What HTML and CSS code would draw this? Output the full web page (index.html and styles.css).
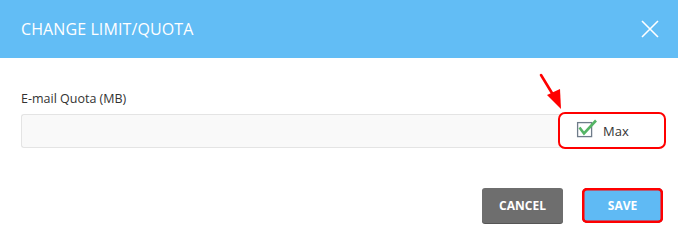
FILE: index.html
```html
<!DOCTYPE html>
<html>
<head>
<meta charset="utf-8">
<link rel="stylesheet" href="styles.css">
</head>
<body>
<div class="modal">
  <div class="header">
    <span class="title">CHANGE LIMIT/QUOTA</span>
    <svg class="close" width="18" height="18" viewBox="0 0 18 18"><path d="M1 1L17 17M17 1L1 17" stroke="#fff" stroke-width="1.6" fill="none"/></svg>
  </div>
  <div class="body">
    <label class="label">E-mail Quota (MB)</label>
    <div class="group">
      <div class="input"></div>
      <div class="addon">
        <svg class="cb" width="22" height="20" viewBox="0 0 22 20"><rect x="1.6" y="4.6" width="14" height="14" fill="#fff" stroke="#6f7c8a" stroke-width="1.3"/><path d="M3.5 9.5L8 15.5L20 2.5" stroke="#55b565" stroke-width="2.6" fill="none"/></svg>
        <span class="max">Max</span>
      </div>
      <div class="highlight"></div>
      <svg class="arrow" width="30" height="42" viewBox="0 0 30 42"><path d="M3 3L17 26" stroke="#f00" stroke-width="2.6" fill="none" stroke-linecap="round"/><path d="M9 23L23 37L22 17Z" fill="#f00"/></svg>
    </div>
  </div>
  <div class="footer">
    <button class="btn cancel">CANCEL</button>
    <button class="btn save">SAVE</button>
  </div>
</div>
</body>
</html>
```
FILE: styles.css
```css
* { box-sizing: border-box; }
body { margin: 0; font-family: "Open Sans", sans-serif; background: #fff; }
.modal { width: 678px; height: 232px; }
.header {
  height: 58px; background: #62bdf5;
  display: flex; align-items: center; justify-content: space-between;
  padding: 0 19px 0 21px;
}
.title { color: #fff; font-size: 16px; font-weight: 500; letter-spacing: 0.1px; }
.close { display: block; }
.body { padding: 32px 21px 0 21px; }
.label { display: block; font-size: 12.5px; color: #333; font-weight: 500; line-height: 18px; margin-bottom: 6px; }
.group { display: flex; height: 34px; position: relative; }
.input { flex: 1; background: #f9f9f9; border: 1px solid #e4e4e4; border-right: none; border-radius: 3px 0 0 3px; }
.addon {
  width: 97px; background: #fff;
  display: flex; align-items: center; padding-left: 16px;
}
.cb { display: block; margin-top: -6px; }
.max { font-size: 13px; color: #333; margin-left: 5px; }
.highlight {
  position: absolute; left: 537px; top: -2px; width: 108px; height: 37px;
  border: 2.5px solid #f00; border-radius: 7px;
}
.arrow { position: absolute; left: 517px; top: -42px; }
.footer { display: flex; justify-content: flex-end; gap: 19px; padding: 40px 15px 0 0; }
.btn {
  height: 35px; width: 81px; border: none; border-radius: 3px; color: #fff;
  font-family: "Open Sans", sans-serif; font-weight: 700; font-size: 12px; padding: 0;
}
.cancel { background: #6e6e6e; box-shadow: 0 1px 0 #555; }
.save { background: #5fbaf4; box-shadow: inset 0 0 0 1px #f00, inset 0 0 0 2.5px #f00; border-radius: 5px; }
```
